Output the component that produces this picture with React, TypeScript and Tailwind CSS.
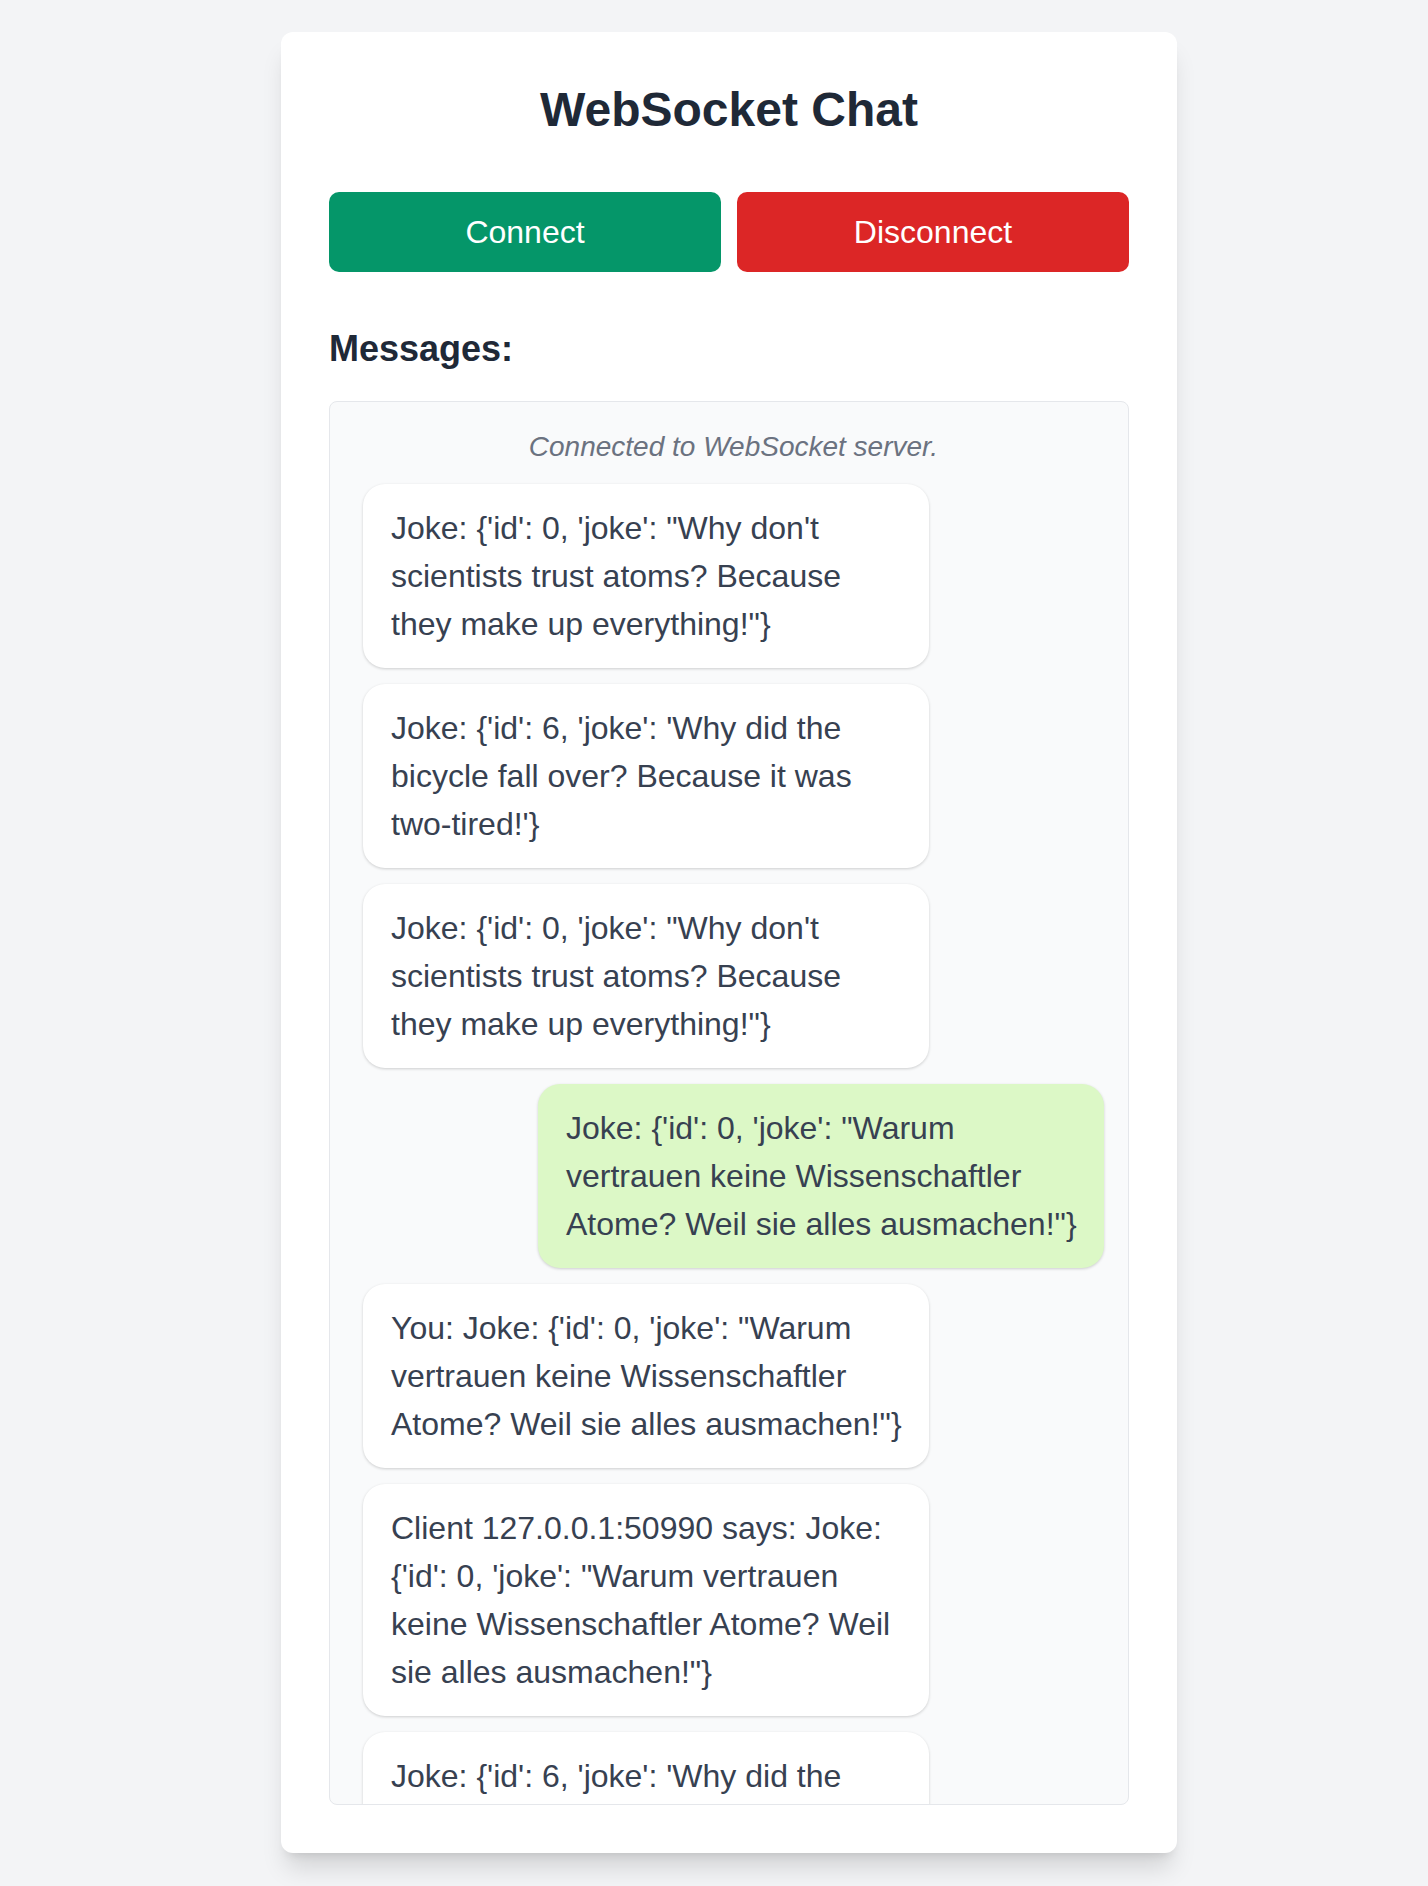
import { useState } from 'react'

type Message = { id: number; text: string; mine?: boolean }

const JOKE_ATOMS = `Joke: {'id': 0, 'joke': "Why don't scientists trust atoms? Because they make up everything!"}`
const JOKE_BIKE = `Joke: {'id': 6, 'joke': 'Why did the bicycle fall over? Because it was two-tired!'}`
const JOKE_DE = `Joke: {'id': 0, 'joke': "Warum vertrauen keine Wissenschaftler Atome? Weil sie alles ausmachen!"}`

const initialMessages: Message[] = [
  { id: 1, text: JOKE_ATOMS },
  { id: 2, text: JOKE_BIKE },
  { id: 3, text: JOKE_ATOMS },
  { id: 4, text: JOKE_DE, mine: true },
  { id: 5, text: `You: ${JOKE_DE}` },
  { id: 6, text: `Client 127.0.0.1:50990 says: ${JOKE_DE}` },
  { id: 7, text: JOKE_BIKE },
]

function Bubble({ message }: { message: Message }) {
  return (
    <div
      className={
        message.mine
          ? 'w-full max-w-[566px] shrink-0 self-end rounded-[22px] bg-[#dcf8c6] py-5 pr-[25px] pl-7 text-[32px] leading-[48px] text-[#374151] shadow-[0_1px_3px_rgba(0,0,0,0.18)]'
          : 'ml-[9px] w-full max-w-[566px] shrink-0 self-start rounded-[22px] bg-white py-5 pr-[25px] pl-7 text-[32px] leading-[48px] text-[#374151] shadow-[0_1px_3px_rgba(0,0,0,0.18)]'
      }
    >
      {message.text}
    </div>
  )
}

export default function App() {
  const [connected, setConnected] = useState(true)
  const [messages] = useState<Message[]>(initialMessages)

  return (
    <div className="min-h-screen bg-[#f3f4f6] pt-8 pl-[30px] font-['Liberation_Sans',Arial,sans-serif]">
      <div className="mx-auto w-full max-w-4xl rounded-xl bg-white p-12 shadow-[0_20px_25px_-5px_rgba(0,0,0,0.13),0_8px_10px_-6px_rgba(0,0,0,0.1)]">
        <h1 className="mb-[52px] text-center text-5xl leading-[60px] font-bold text-[#1f2937]">
          WebSocket Chat
        </h1>

        {/* Connect / Disconnect */}
        <div className="flex gap-4">
          <button
            type="button"
            onClick={() => setConnected(true)}
            className="flex-1 cursor-pointer rounded-[10px] bg-[#059669] py-4 text-[32px] leading-[48px] text-white"
          >
            Connect
          </button>
          <button
            type="button"
            onClick={() => setConnected(false)}
            className="flex-1 cursor-pointer rounded-[10px] bg-[#dc2626] py-4 text-[32px] leading-[48px] text-white"
          >
            Disconnect
          </button>
        </div>

        <h2 className="mt-[57px] mb-8 text-4xl leading-[40px] font-bold text-[#1f2937]">Messages:</h2>

        {/* Message log */}
        <div className="flex h-[1404px] flex-col gap-4 overflow-hidden rounded-lg border border-[#e5e7eb] bg-[#f9fafb] p-6">
          <p className="shrink-0 pl-[9px] text-center text-[28px] leading-[42px] text-[#6b7280] italic">
            {connected ? 'Connected to WebSocket server.' : 'Disconnected from WebSocket server.'}
          </p>
          {messages.map((m) => (
            <Bubble key={m.id} message={m} />
          ))}
        </div>
      </div>
    </div>
  )
}
